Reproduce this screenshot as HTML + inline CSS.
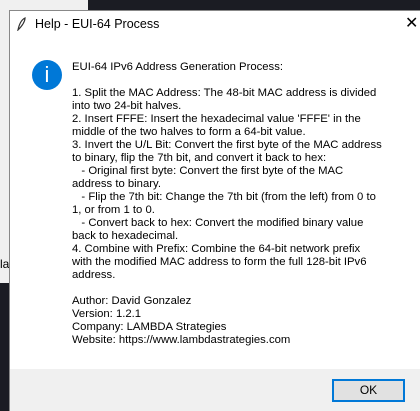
<html><head><style>
body{margin:0;width:420px;height:411px;position:relative;overflow:hidden;background:#1b1c23;font-family:"Liberation Sans",sans-serif}
.tl{position:absolute;left:0;top:0;width:88px;height:11px;background:#f0f0f0}
.ls{position:absolute;left:0;top:0;width:10px;height:283px;background:#f0f0f0}
.la{position:absolute;left:0;top:257px;font-size:12px;color:#000}
.dlg{position:absolute;left:9px;top:10px;width:411px;height:400px;background:#fff;border-left:1px solid #888;border-top:1px solid #888}
.title{position:absolute;left:25px;top:6px;font-size:12.5px;color:#000}
.x{position:absolute;left:395px;top:2px;font-size:16px;color:#000}
.ic{position:absolute;left:22px;top:49px;width:30px;height:30px;border-radius:50%;background:#0078d7;color:#fff;text-align:center;font-size:22px;line-height:30px}
.txt{position:absolute;left:62px;top:50px;font-size:11.3px;line-height:13px;color:#000;white-space:pre}
.foot{position:absolute;left:0;top:358px;width:411px;height:42px;background:#f0f0f0}
.ok{position:absolute;left:322px;top:10px;width:69px;height:19px;border:2px solid #0078d7;background:#e1e1e1;text-align:center;font-size:12px;line-height:19px}
</style></head><body>
<div class="tl"></div><div class="ls"></div><div class="la">la</div>
<div class="dlg">
<svg style="position:absolute;left:6px;top:6px" width="10" height="14" viewBox="0 0 10 14"><path d="M2 13 C3 8 5 3 9 1 C9 5 6 9 2 13Z" fill="none" stroke="#333" stroke-width="1.2"/></svg>
<div class="title">Help - EUI-64 Process</div>
<div class="x">✕</div>
<div class="ic">i</div>
<div class="txt">EUI-64 IPv6 Address Generation Process:

1. Split the MAC Address: The 48-bit MAC address is divided
into two 24-bit halves.
2. Insert FFFE: Insert the hexadecimal value 'FFFE' in the
middle of the two halves to form a 64-bit value.
3. Invert the U/L Bit: Convert the first byte of the MAC address
to binary, flip the 7th bit, and convert it back to hex:
   - Original first byte: Convert the first byte of the MAC
address to binary.
   - Flip the 7th bit: Change the 7th bit (from the left) from 0 to
1, or from 1 to 0.
   - Convert back to hex: Convert the modified binary value
back to hexadecimal.
4. Combine with Prefix: Combine the 64-bit network prefix
with the modified MAC address to form the full 128-bit IPv6
address.

Author: David Gonzalez
Version: 1.2.1
Company: LAMBDA Strategies
Website: https://www.lambdastrategies.com</div>
<div class="foot"><div class="ok">OK</div></div>
</div>
</body></html>
